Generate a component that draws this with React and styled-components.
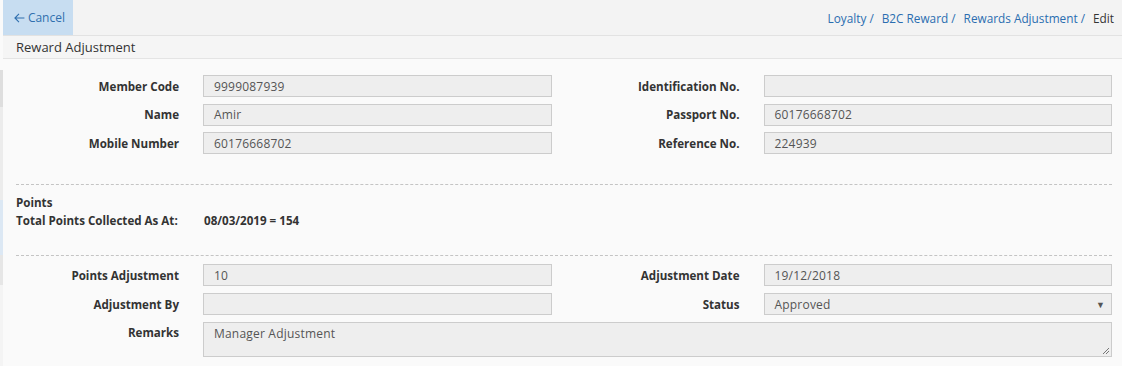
import React from 'react'
import styled, { createGlobalStyle } from 'styled-components'

const GlobalStyle = createGlobalStyle`
    html, body {
        margin: 0;
        padding: 0;
        background: #fafafa;
    }
    body {
        font-family: "Open Sans", "Liberation Sans", sans-serif;
        font-size: 12px;
        color: #333333;
    }
`

const Shell = styled.div`
    display: flex;
    width: 1122px;
    height: 366px;
    overflow: hidden;
`

const SideStrip = styled.div`
    display: flex;
    flex-direction: column;
    width: 3px;
    flex-shrink: 0;
`

const StripBlock = styled.div`
    height: ${(p) => p.h}px;
    flex-shrink: 0;
    background: ${(p) => p.color};
`

const Main = styled.div`
    flex: 1;
    display: flex;
    flex-direction: column;
    background: #fafafa;
`

const TopBar = styled.div`
    display: flex;
    align-items: stretch;
    justify-content: space-between;
    height: 35px;
    background: #f3f3f3;
    border-bottom: 1px solid #e2e2e2;
`

const CancelButton = styled.a`
    display: flex;
    align-items: center;
    gap: 3px;
    padding: 0 8px 0 11px;
    width: 51px;
    background: #c7ddf1;
    color: #2f6fae;
    font-size: 12px;
    text-decoration: none;
    cursor: pointer;
`

const Breadcrumb = styled.div`
    display: flex;
    align-items: center;
    padding-right: 8px;
    font-size: 11.8px;
`

const Crumb = styled.a`
    color: #2a6db0;
    text-decoration: none;
    margin-right: 4px;

    &::after {
        content: " /";
        margin-right: 4px;
        color: #2a6db0;
    }
`

const CrumbCurrent = styled.span`
    color: #333333;
`

const SubHeader = styled.div`
    height: 22px;
    display: flex;
    align-items: center;
    padding-left: 13px;
    font-size: 13px;
    color: #333333;
    background: #f5f5f5;
    border-bottom: 1px solid #e4e4e4;
`

const Body = styled.div`
    padding: 16px 10px 0 13px;
`

const FieldGrid = styled.div`
    display: grid;
    grid-template-columns: 1fr 1fr;
    column-gap: 25px;
    row-gap: ${(p) => p.gap}px;
`

const Field = styled.div`
    display: grid;
    grid-template-columns: 163px 1fr;
    column-gap: 24px;
    align-items: ${(p) => (p.top ? 'start' : 'center')};
    grid-column: ${(p) => (p.wide ? '1 / -1' : 'auto')};
`

const Label = styled.label`
    text-align: right;
    font-weight: 700;
    font-size: 11.6px;
    color: #333333;
    padding-top: ${(p) => (p.top ? '3px' : '0')};
`

const Input = styled.div`
    position: relative;
    box-sizing: border-box;
    height: ${(p) => p.h || 22}px;
    padding: ${(p) => (p.multi ? '2px 10px' : '0 10px')};
    display: flex;
    align-items: ${(p) => (p.multi ? 'flex-start' : 'center')};
    background: #eeeeee;
    border: 1px solid #cccccc;
    color: #555555;
    font-size: 12px;
    letter-spacing: 0.2px;
`

const Caret = styled.span`
    position: absolute;
    right: 6px;
    top: 50%;
    transform: translateY(-50%);
    font-size: 9px;
    color: #555555;
`

const Grip = styled.svg`
    position: absolute;
    right: 1px;
    bottom: 1px;
`

const Divider = styled.div`
    border-top: 1px dashed #c4c4c4;
    margin: ${(p) => p.m};
`

const PointsBlock = styled.div`
    display: flex;
    flex-direction: column;
    gap: 2px;
    line-height: 16px;
    font-weight: 700;
    font-size: 11.6px;
    color: #333333;
`

const PointsRow = styled.div`
    display: grid;
    grid-template-columns: 188px 1fr;
`

const sideBlocks = [
    { h: 70, color: '#fafafa' },
    { h: 37, color: '#dedede' },
    { h: 93, color: '#ececec' },
    { h: 55, color: '#dce8f4' },
    { h: 30, color: '#e6e6e6' },
    { h: 81, color: '#f4f4f4' }
]

const ArrowLeft = () => (
    <svg width="12" height="12" viewBox="0 0 12 12" fill="none" stroke="#2f6fae" strokeWidth="1.2">
        <path d="M11.5 6H1M5.5 1.5L1 6L5.5 10.5" />
    </svg>
)

const App = () => (
    <>
        <GlobalStyle />
        <Shell>
            <SideStrip>
                {sideBlocks.map((b, i) => (
                    <StripBlock key={i} h={b.h} color={b.color} />
                ))}
            </SideStrip>
            <Main>
                <TopBar>
                    <CancelButton>
                        <ArrowLeft />
                        Cancel
                    </CancelButton>
                    <Breadcrumb>
                        <Crumb>Loyalty</Crumb>
                        <Crumb>B2C Reward</Crumb>
                        <Crumb>Rewards Adjustment</Crumb>
                        <CrumbCurrent>Edit</CrumbCurrent>
                    </Breadcrumb>
                </TopBar>
                <SubHeader>Reward Adjustment</SubHeader>
                <Body>
                    <FieldGrid gap={6.5}>
                        <Field>
                            <Label>Member Code</Label>
                            <Input>9999087939</Input>
                        </Field>
                        <Field>
                            <Label>Identification No.</Label>
                            <Input />
                        </Field>
                        <Field>
                            <Label>Name</Label>
                            <Input>Amir</Input>
                        </Field>
                        <Field>
                            <Label>Passport No.</Label>
                            <Input>60176668702</Input>
                        </Field>
                        <Field>
                            <Label>Mobile Number</Label>
                            <Input>60176668702</Input>
                        </Field>
                        <Field>
                            <Label>Reference No.</Label>
                            <Input>224939</Input>
                        </Field>
                    </FieldGrid>
                    <Divider m="30px 0 10px" />
                    <PointsBlock>
                        <div>Points</div>
                        <PointsRow>
                            <span>Total Points Collected As At:</span>
                            <span>08/03/2019 = 154</span>
                        </PointsRow>
                    </PointsBlock>
                    <Divider m="26px 0 8px" />
                    <FieldGrid gap={7}>
                        <Field>
                            <Label>Points Adjustment</Label>
                            <Input>10</Input>
                        </Field>
                        <Field>
                            <Label>Adjustment Date</Label>
                            <Input>19/12/2018</Input>
                        </Field>
                        <Field>
                            <Label>Adjustment By</Label>
                            <Input />
                        </Field>
                        <Field>
                            <Label>Status</Label>
                            <Input>
                                Approved
                                <Caret>▼</Caret>
                            </Input>
                        </Field>
                        <Field wide top>
                            <Label top>Remarks</Label>
                            <Input h={35} multi>
                                Manager Adjustment
                                <Grip width="9" height="9" viewBox="0 0 9 9" stroke="#777" strokeWidth="1">
                                    <path d="M8 2L2 8M8 5L5 8" />
                                </Grip>
                            </Input>
                        </Field>
                    </FieldGrid>
                </Body>
            </Main>
        </Shell>
    </>
)

export default App
